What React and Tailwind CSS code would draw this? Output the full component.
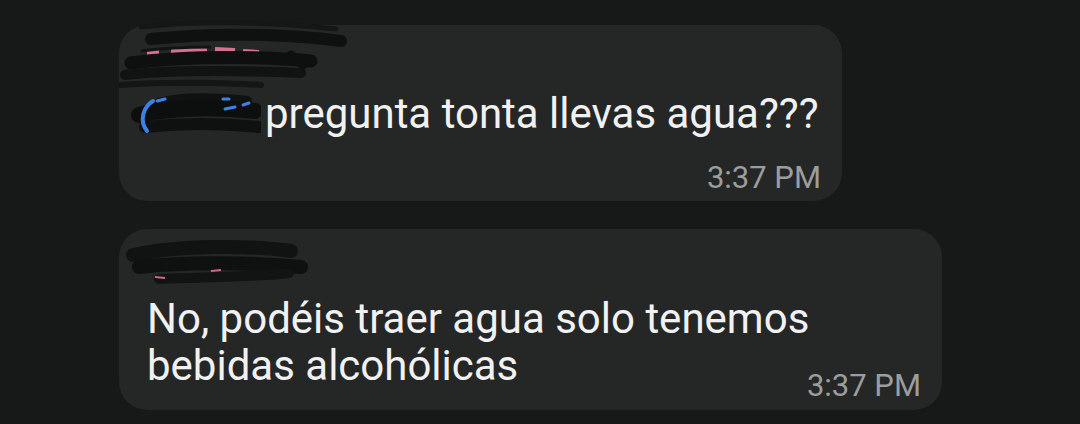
import React from "react";

function Scribble1() {
  return (
    <svg width="240" height="80" viewBox="0 0 240 80" className="block">
      <path d="M30 8 C80 2 150 2 225 10" stroke="#151616" strokeWidth="5" fill="none" strokeLinecap="round" />
      <path d="M40 20 C100 14 170 14 230 22" stroke="#0f1010" strokeWidth="12" fill="none" strokeLinecap="round" />
      <path d="M36 33 L48 33 M60 31 L96 30 M104 31 L124 32 M132 33 L148 34" stroke="#d9708f" strokeWidth="6" fill="none" />
      <path d="M30 32 C60 28 80 28 100 28" stroke="#121313" strokeWidth="3" fill="none" />
      <path d="M20 44 C80 36 160 38 200 42" stroke="#0e0f0f" strokeWidth="13" fill="none" strokeLinecap="round" />
      <path d="M14 56 C70 50 140 52 190 54" stroke="#111212" strokeWidth="10" fill="none" strokeLinecap="round" />
      <path d="M10 66 C60 62 120 64 150 66" stroke="#141515" strokeWidth="6" fill="none" strokeLinecap="round" />
      <path d="M180 36 L192 46" stroke="#0e0f0f" strokeWidth="9" strokeLinecap="round" />
    </svg>
  );
}

function Mention() {
  return (
    <svg width="130" height="50" viewBox="0 0 130 50" className="block">
      <path d="M28 14 C50 8 80 8 116 12" stroke="#101111" strokeWidth="10" fill="none" strokeLinecap="round" />
      <path d="M8 26 C40 18 90 18 124 22" stroke="#0d0e0e" strokeWidth="16" fill="none" strokeLinecap="round" />
      <path d="M14 38 C50 34 90 34 128 38" stroke="#0f1010" strokeWidth="12" fill="none" strokeLinecap="round" />
      <path d="M22 12 C12 18 8 32 16 42" stroke="#3b82e6" strokeWidth="4" fill="none" strokeLinecap="round" />
      <path d="M26 12 L34 10" stroke="#3b82e6" strokeWidth="3" fill="none" strokeLinecap="round" />
      <path d="M92 10 L98 10 M94 20 L104 18 M112 16 L118 14" stroke="#3b82e6" strokeWidth="3" fill="none" strokeLinecap="round" />
    </svg>
  );
}

function Scribble2() {
  return (
    <svg width="190" height="60" viewBox="0 0 190 60" className="block">
      <path d="M14 18 C60 8 130 8 172 14" stroke="#111212" strokeWidth="14" fill="none" strokeLinecap="round" />
      <path d="M20 30 C70 24 140 26 182 30" stroke="#0f1010" strokeWidth="14" fill="none" strokeLinecap="round" />
      <path d="M40 42 C90 40 140 40 170 36" stroke="#121313" strokeWidth="10" fill="none" strokeLinecap="round" />
      <path d="M36 40 L46 41 M92 34 L102 33" stroke="#c86a86" strokeWidth="2" fill="none" />
    </svg>
  );
}

export default function App() {
  return (
    <div
      className="w-[1080px] h-[424px] bg-[#171919] overflow-hidden flex flex-col gap-[28px] pt-[25px] pl-[119px]"
      style={{ fontFamily: "Roboto, 'Noto Sans', sans-serif" }}
    >
      <div className="w-[723px] h-[176px] bg-[#252727] rounded-[28px] flex flex-col relative">
        <div className="absolute left-[-8px] top-[-6px]">
          <Scribble1 />
        </div>
        <div className="h-[64px]" />
        <div className="flex items-center h-[50px]">
          <div className="ml-[12px] w-[134px]">
            <Mention />
          </div>
          <span className="text-[42px] leading-[50px] text-[#f1f1f1] whitespace-nowrap">pregunta tonta llevas agua???</span>
        </div>
        <div className="flex justify-end pr-[21px] mt-[21px]">
          <span className="text-[31px] leading-[36px] text-[#9c9e9e]">3:37 PM</span>
        </div>
      </div>
      <div className="w-[823px] h-[181px] bg-[#252727] rounded-[28px] flex flex-col relative">
        <div className="absolute left-[0px] top-[8px]">
          <Scribble2 />
        </div>
        <div className="h-[66px]" />
        <div className="pl-[28px] text-[42px] leading-[47px] text-[#f1f1f1] whitespace-nowrap">
          No, podéis traer agua solo tenemos
          <br />
          bebidas alcohólicas
        </div>
        <div className="flex justify-end pr-[21px] mt-[-21px]">
          <span className="text-[31px] leading-[36px] text-[#9c9e9e]">3:37 PM</span>
        </div>
      </div>
    </div>
  );
}
